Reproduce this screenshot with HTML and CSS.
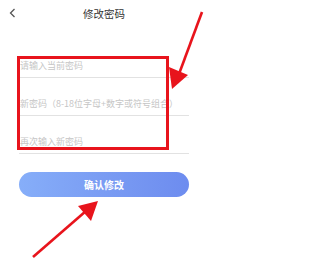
FILE: index.html
```html
<!DOCTYPE html>
<html lang="zh">
<head>
<meta charset="utf-8">
<link rel="stylesheet" href="styles.css">
</head>
<body>
<div class="page">
  <header class="header">
    <svg class="back" width="7" height="10" viewBox="0 0 7 10"><polyline points="5.5,1 1.5,5 5.5,9" fill="none" stroke="#555" stroke-width="1.3"/></svg>
    <div class="title">修改密码</div>
  </header>
  <form class="form">
    <div class="field"><span class="ph">请输入当前密码</span></div>
    <div class="field"><span class="ph">新密码（8-18位字母+数字或符号组合）</span></div>
    <div class="field"><span class="ph">再次输入新密码</span></div>
    <button type="button" class="btn">确认修改</button>
  </form>
  <div class="mark-box"></div>
  <svg class="arrows" width="208" height="262" viewBox="0 0 208 262">
    <line x1="202" y1="12" x2="179" y2="74" stroke="#e8141c" stroke-width="2.6"/>
    <polygon points="169,67 188,75 172,89" fill="#e8141c"/>
    <line x1="33" y1="257" x2="86" y2="211" stroke="#e8141c" stroke-width="2.6"/>
    <polygon points="78,206 91,221 98,201" fill="#e8141c"/>
  </svg>
</div>
</body>
</html>
```
FILE: styles.css
```css
html, body {
  margin: 0;
  padding: 0;
  background: #fff;
}
.page {
  position: relative;
  width: 208px;
  height: 262px;
  overflow: hidden;
  font-family: "Noto Sans CJK SC", "Noto Sans", sans-serif;
}
.header {
  height: 28px;
  display: flex;
  align-items: center;
  justify-content: center;
  position: relative;
}
.back {
  position: absolute;
  left: 9px;
  top: 8px;
}
.title {
  font-size: 10.5px;
  color: #333;
  line-height: 14px;
}
.form {
  margin: 12px 19px 0;
  display: flex;
  flex-direction: column;
}
.field {
  border-bottom: 1px solid #e2e2e2;
  display: flex;
  align-items: flex-end;
  padding-bottom: 5px;
  box-sizing: content-box;
  height: 32px;
}
.ph {
  font-size: 9px;
  line-height: 12px;
  color: #c6c6c6;
  white-space: nowrap;
  margin-left: 1px;
}
.btn {
  margin-top: 18px;
  height: 25px;
  border: none;
  border-radius: 13px;
  background: linear-gradient(90deg, #86aef9 0%, #7a9cf3 50%, #6d8cef 100%);
  color: #fff;
  font-family: inherit;
  font-size: 10px;
  font-weight: bold;
  padding: 0;
}
.mark-box {
  position: absolute;
  left: 17px;
  top: 56px;
  width: 146px;
  height: 88px;
  border: 3px solid #e8141c;
}
.arrows {
  position: absolute;
  left: 0;
  top: 0;
}
```
